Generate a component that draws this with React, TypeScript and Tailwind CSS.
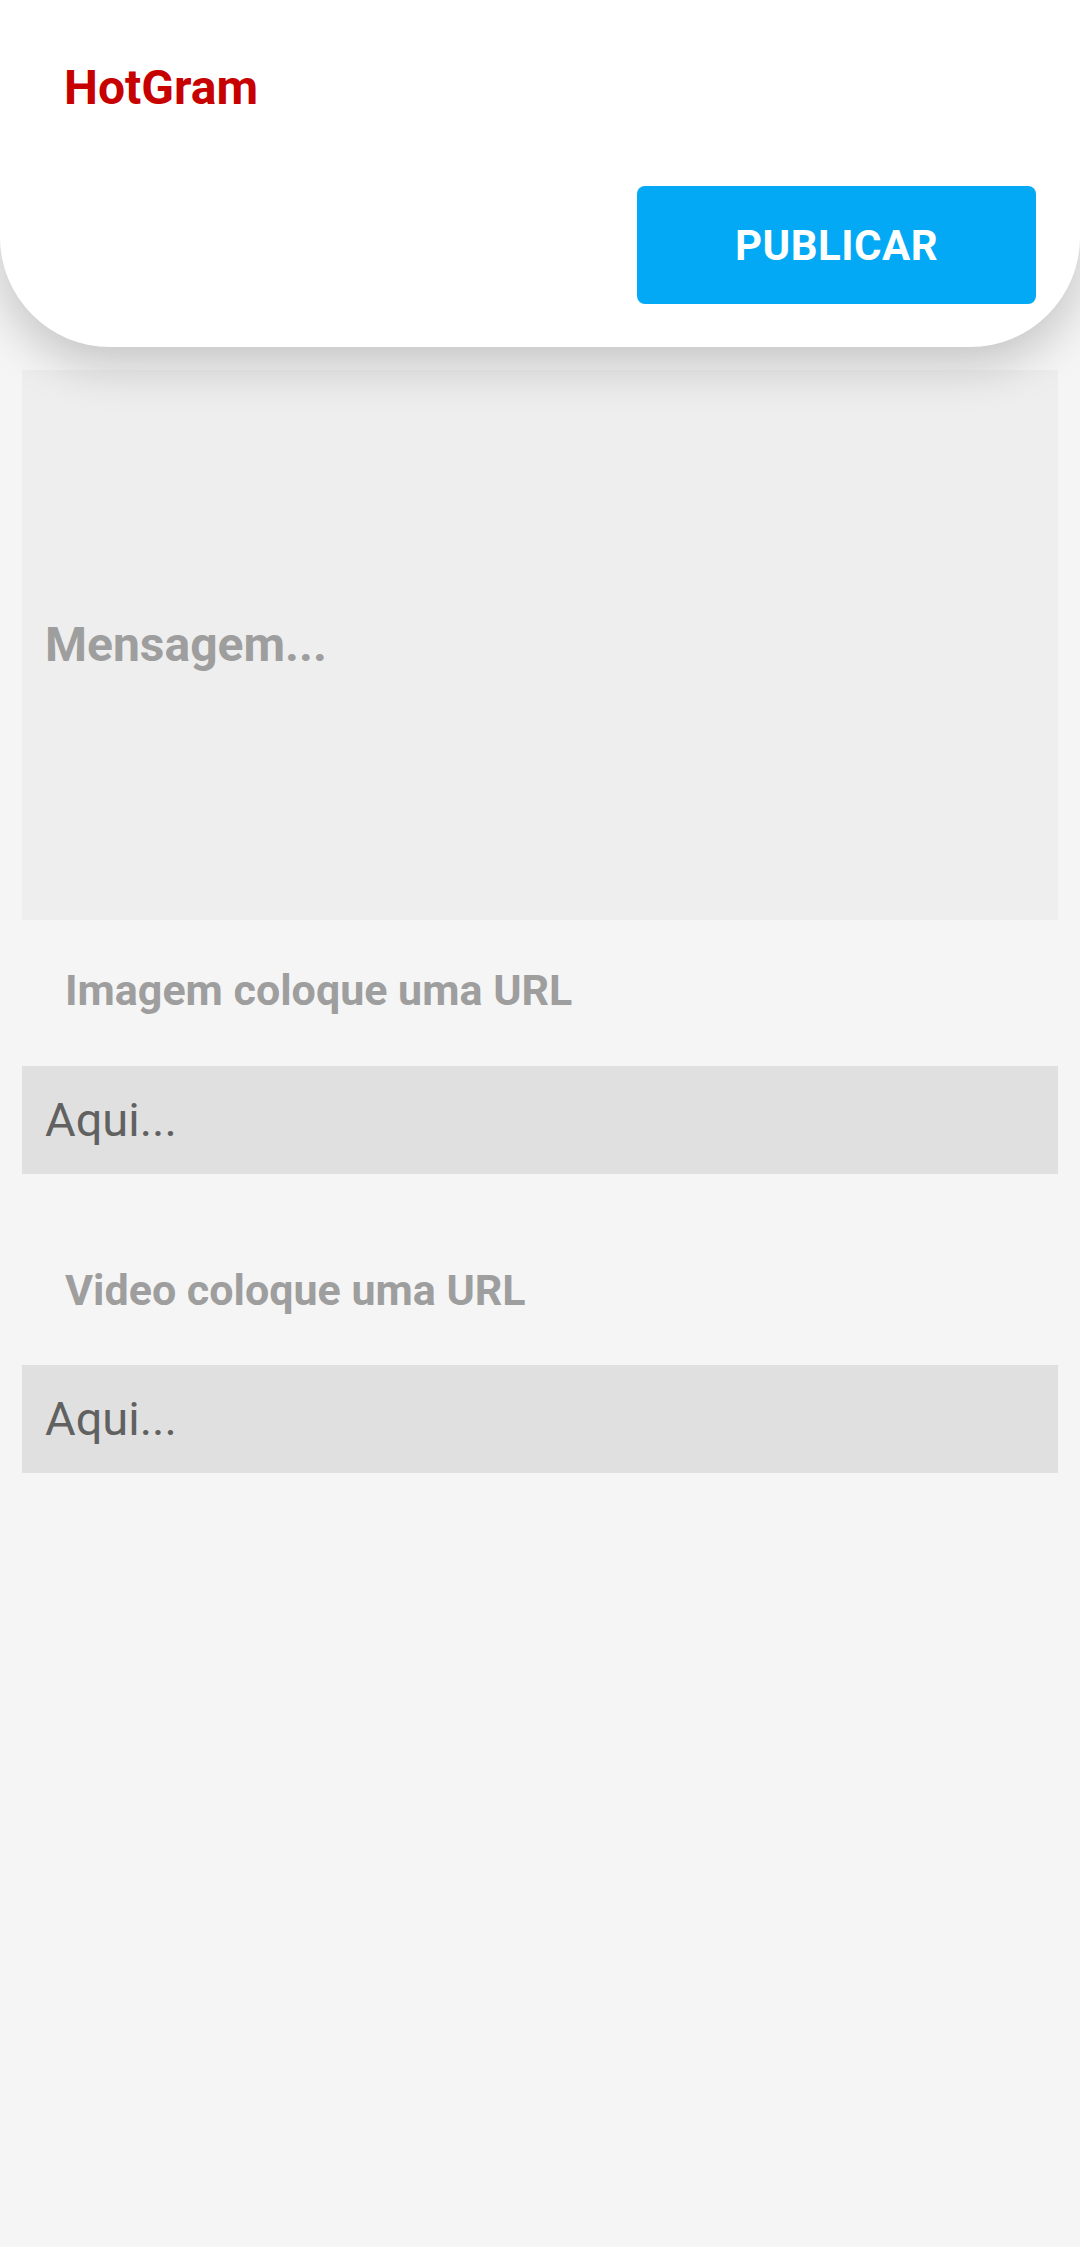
export default function App() {
  const font = { fontFamily: 'Roboto, "Noto Sans", sans-serif' }
  return (
    <div className="min-h-screen bg-[#f5f5f5]" style={font}>
      {/* header */}
      <header className="relative z-10 h-[347px] bg-white rounded-b-[110px] shadow-[0_18px_48px_rgba(0,0,0,0.2)] flex flex-col">
        <h1 className="mt-[60px] pl-[64px] text-[48px] leading-[55px] font-bold text-[#c70000]">HotGram</h1>
        <div className="mt-[71px] flex justify-end pr-[44px]">
          <button className="w-[399px] h-[118px] rounded-[8px] bg-[#03a9f4] text-white text-[42px] font-bold tracking-[0.5px]">
            PUBLICAR
          </button>
        </div>
      </header>

      <main className="px-[22px]">
        <div className="mt-[23px] h-[550px] bg-[#eeeeee] flex items-center pl-[23px]">
          <span className="text-[48px] font-bold text-[#9e9e9e]">Mensagem...</span>
        </div>

        <label className="block mt-[46px] pl-[43px] text-[43px] leading-[49px] font-bold text-[#9e9e9e]">
          Imagem coloque uma URL
        </label>
        <div className="mt-[51px] h-[108px] bg-[#e0e0e0] flex items-center pl-[23px]">
          <span className="text-[47px] text-[#616161]">Aqui...</span>
        </div>

        <label className="block mt-[92px] pl-[43px] text-[43px] leading-[49px] font-bold text-[#9e9e9e]">
          Video coloque uma URL
        </label>
        <div className="mt-[50px] h-[108px] bg-[#e0e0e0] flex items-center pl-[23px]">
          <span className="text-[47px] text-[#616161]">Aqui...</span>
        </div>
      </main>
    </div>
  )
}
